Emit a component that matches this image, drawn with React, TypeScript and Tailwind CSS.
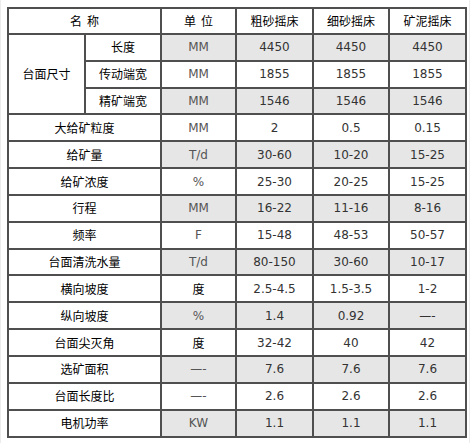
const groupRows = [
  { name: "长度", unit: "MM", v: ["4450", "4450", "4450"] },
  { name: "传动端宽", unit: "MM", v: ["1855", "1855", "1855"] },
  { name: "精矿端宽", unit: "MM", v: ["1546", "1546", "1546"] },
];

const rows = [
  { name: "大给矿粒度", unit: "MM", v: ["2", "0.5", "0.15"] },
  { name: "给矿量", unit: "T/d", v: ["30-60", "10-20", "15-25"] },
  { name: "给矿浓度", unit: "%", v: ["25-30", "20-25", "15-25"] },
  { name: "行程", unit: "MM", v: ["16-22", "11-16", "8-16"] },
  { name: "频率", unit: "F", v: ["15-48", "48-53", "50-57"] },
  { name: "台面清洗水量", unit: "T/d", v: ["80-150", "30-60", "10-17"] },
  { name: "横向坡度", unit: "度", v: ["2.5-4.5", "1.5-3.5", "1-2"] },
  { name: "纵向坡度", unit: "%", v: ["1.4", "0.92", "—-"] },
  { name: "台面尖灭角", unit: "度", v: ["32-42", "40", "42"] },
  { name: "选矿面积", unit: "—-", v: ["7.6", "7.6", "7.6"] },
  { name: "台面长度比", unit: "—-", v: ["2.6", "2.6", "2.6"] },
  { name: "电机功率", unit: "KW", v: ["1.1", "1.1", "1.1"] },
];

const cjk = "font-['SimSun','Noto_Sans_CJK_SC',sans-serif] text-[12px] text-black";
const num = "font-['DejaVu_Sans','Noto_Sans_CJK_SC',sans-serif] text-[12px] text-[#333]";
const unitNum = "font-['DejaVu_Sans','Noto_Sans_CJK_SC',sans-serif] text-[12px] text-[#555]";
const cell = "border-2 border-[#4f4f4f] text-center p-0 leading-none";

const App = () => {
  return (
    <div className="w-[472px] h-[443px] bg-white">
      <div className="w-[470px] h-[443px] border-x border-[#ececec] pl-[6px] pt-[7px]">
        <table className="table-fixed border-collapse w-[458px]">
          <colgroup>
            <col className="w-[77px]" />
            <col className="w-[76px]" />
            <col className="w-[75px]" />
            <col className="w-[77px]" />
            <col className="w-[76px]" />
            <col className="w-[77px]" />
          </colgroup>
          <tbody>
            <tr className="h-[25.9px]">
              <td colSpan={2} className={`${cell} ${cjk}`}>
                名<span className="inline-block w-[5px]" />称
              </td>
              <td className={`${cell} ${cjk}`}>
                单<span className="inline-block w-[5px]" />位
              </td>
              <td className={`${cell} ${cjk}`}>粗砂摇床</td>
              <td className={`${cell} ${cjk}`}>细砂摇床</td>
              <td className={`${cell} ${cjk}`}>矿泥摇床</td>
            </tr>
            {groupRows.map((r, i) => {
              const bg = i % 2 === 0 ? "bg-[#e6e6e6]" : "bg-white";
              return (
                <tr key={r.name} className="h-[26.85px]">
                  {i === 0 && (
                    <td rowSpan={3} className={`${cell} ${cjk}`}>台面尺寸</td>
                  )}
                  <td className={`${cell} ${cjk}`}>{r.name}</td>
                  <td className={`${cell} ${unitNum} ${bg}`}>{r.unit}</td>
                  {r.v.map((v, j) => (
                    <td key={j} className={`${cell} ${num} ${bg}`}>{v}</td>
                  ))}
                </tr>
              );
            })}
            {rows.map((r, i) => {
              const bg = i % 2 === 1 ? "bg-[#e6e6e6]" : "bg-white";
              const unitFont = /[A-Za-z%—-]/.test(r.unit) ? unitNum : cjk;
              return (
                <tr key={r.name} className="h-[26.85px]">
                  <td colSpan={2} className={`${cell} ${cjk}`}>{r.name}</td>
                  <td className={`${cell} ${unitFont} ${bg}`}>{r.unit}</td>
                  {r.v.map((v, j) => (
                    <td key={j} className={`${cell} ${num} ${bg}`}>{v}</td>
                  ))}
                </tr>
              );
            })}
          </tbody>
        </table>
      </div>
    </div>
  );
};

export default App;
